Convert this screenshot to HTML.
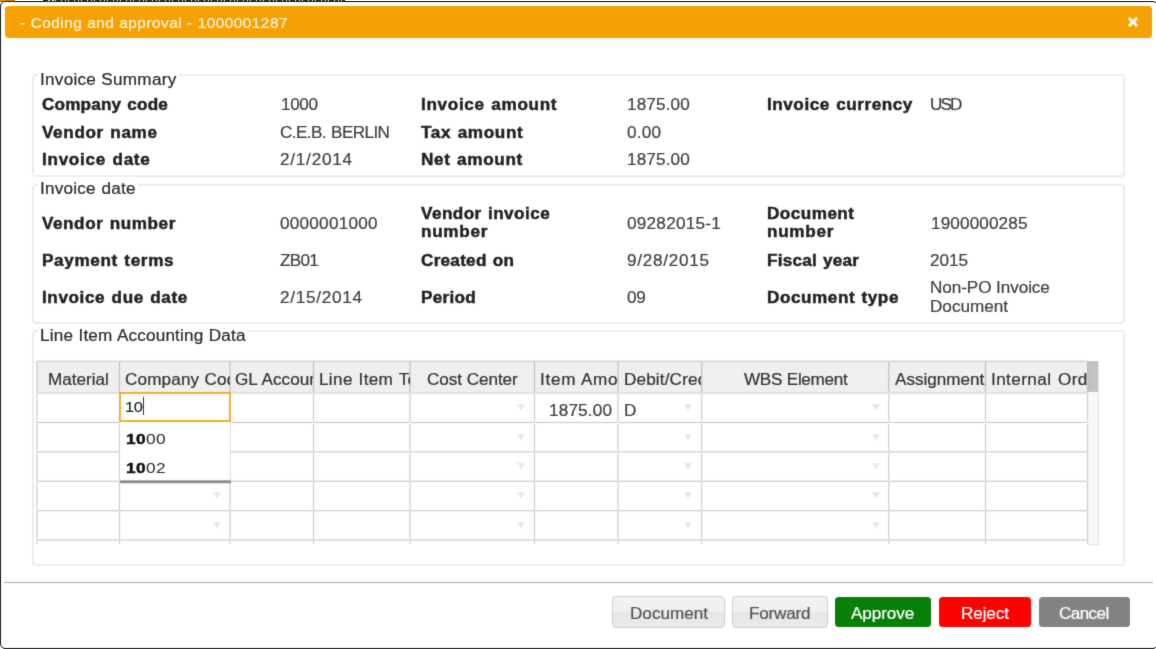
<!DOCTYPE html>
<html><head><meta charset="utf-8"><title>Coding and approval</title>
<style>
html,body{margin:0;padding:0;}
body{width:1156px;height:649px;overflow:hidden;background:#fff;position:relative;font-family:"Liberation Sans",sans-serif;}
.t{position:absolute;white-space:nowrap;transform-origin:0 0;font-size:16px;line-height:20px;color:#333;font-family:"Liberation Sans",sans-serif;}
.abs{position:absolute;}
.fs{position:absolute;left:32px;width:1093px;border:2px solid #e8edf3;border-radius:4px;box-sizing:border-box;}
.lg{position:absolute;background:#fff;height:14px;}
.vl{position:absolute;width:1px;background:#d6d6d6;top:361px;height:183px;}
.hl{position:absolute;height:1px;background:#d6d6d6;left:37px;width:1051px;}
.tri{position:absolute;width:0;height:0;border-left:4px solid transparent;border-right:4px solid transparent;border-top:7.5px solid #e9e9e9;}
.hc{position:absolute;top:362px;height:31px;overflow:hidden;}
.btn{position:absolute;top:596px;height:32px;border-radius:4px;box-sizing:border-box;}
.cb{top:597px;height:30px;border-radius:3.5px;}
</style></head><body><svg width="0" height="0" style="position:absolute"><filter id="soft" x="0" y="0" width="100%" height="100%" color-interpolation-filters="sRGB"><feConvolveMatrix order="3" kernelMatrix="0.015 0.085 0.015 0.085 0.6 0.085 0.015 0.085 0.015" divisor="1" edgeMode="duplicate" preserveAlpha="true"/></filter></svg><div id="w" style="filter:url(#soft);position:absolute;left:0;top:0;width:1156px;height:649px;overflow:hidden;will-change:transform;">
<div class="abs" style="left:0;top:0;width:15px;height:2px;background:#d88a00;"></div>
<div class="abs" style="left:43px;top:0;width:302px;height:1px;background:repeating-linear-gradient(90deg,#2a2a2a 0 5px,#fff 5px 6.5px,#2a2a2a 6.5px 9px,#fff 9px 10.5px,#2a2a2a 10.5px 12px,#fff 12px 13px);"></div>
<div class="abs" style="left:0;top:1px;width:1157.6px;height:648px;border:solid #1c1c1c;border-width:1.5px 1.2px 1.7px 1.4px;border-radius:5px;box-sizing:border-box;background:#fff;"></div>
<div class="abs" style="left:5px;top:6px;width:1147px;height:32.4px;background:#f5a103;border-radius:3.5px;"></div>
<span class="t" style="left:20.20px;top:13px;font-size:14.3px;letter-spacing:0.47px;word-spacing:0.3px;color:#fef4df;transform:scaleX(1.07);-webkit-text-stroke:0.2px;">- Coding and approval - 1000001287</span>
<svg class="abs" style="left:1127px;top:16px" width="12" height="12" viewBox="0 0 12 12"><path d="M1.9 1.9 L10.1 10.1 M10.1 1.9 L1.9 10.1" stroke="#fff" stroke-width="2.8" stroke-linecap="butt" fill="none"/></svg>
<div class="fs" style="top:74px;height:103px;"></div>
<div class="fs" style="top:184px;height:140px;"></div>
<div class="fs" style="top:330px;height:235.5px;"></div>
<div class="lg" style="left:37.5px;top:70px;width:141px;"></div>
<div class="lg" style="left:37.5px;top:179px;width:100px;"></div>
<div class="lg" style="left:37.5px;top:326px;width:210px;"></div>
<span class="t" style="left:39.50px;top:70px;letter-spacing:0.25px;word-spacing:0.2px;color:#2a2a2a;-webkit-text-stroke:0.2px;transform:scaleX(1.07);">Invoice Summary</span>
<span class="t" style="left:39.50px;top:179px;letter-spacing:0.18px;word-spacing:1.0px;color:#2a2a2a;-webkit-text-stroke:0.2px;transform:scaleX(1.07);">Invoice date</span>
<span class="t" style="left:39.50px;top:326px;letter-spacing:0.17px;word-spacing:0.4px;color:#2a2a2a;-webkit-text-stroke:0.2px;transform:scaleX(1.07);">Line Item Accounting Data</span>
<span class="t" style="left:41.70px;top:95px;letter-spacing:0.17px;word-spacing:1.0px;color:#222;font-weight:bold;-webkit-text-stroke:0.45px;transform:scaleX(1.07);">Company code</span>
<span class="t" style="left:41.70px;top:123px;letter-spacing:0.60px;word-spacing:1.0px;color:#222;font-weight:bold;-webkit-text-stroke:0.45px;transform:scaleX(1.07);">Vendor name</span>
<span class="t" style="left:41.70px;top:150px;letter-spacing:0.66px;word-spacing:1.0px;color:#222;font-weight:bold;-webkit-text-stroke:0.45px;transform:scaleX(1.07);">Invoice date</span>
<span class="t" style="left:280.50px;top:95px;letter-spacing:-0.35px;color:#404040;-webkit-text-stroke:0.2px;transform:scaleX(1.07);">1000</span>
<span class="t" style="left:280.00px;top:123px;letter-spacing:-0.56px;word-spacing:1.0px;color:#404040;-webkit-text-stroke:0.2px;transform:scaleX(1.07);">C.E.B. BERLIN</span>
<span class="t" style="left:280.00px;top:150px;letter-spacing:0.72px;color:#404040;-webkit-text-stroke:0.2px;transform:scaleX(1.07);">2/1/2014</span>
<span class="t" style="left:420.75px;top:95px;letter-spacing:0.64px;word-spacing:1.0px;color:#222;font-weight:bold;-webkit-text-stroke:0.45px;transform:scaleX(1.07);">Invoice amount</span>
<span class="t" style="left:420.75px;top:123px;letter-spacing:0.61px;word-spacing:1.0px;color:#222;font-weight:bold;-webkit-text-stroke:0.45px;transform:scaleX(1.07);">Tax amount</span>
<span class="t" style="left:420.75px;top:150px;letter-spacing:0.63px;word-spacing:1.0px;color:#222;font-weight:bold;-webkit-text-stroke:0.45px;transform:scaleX(1.07);">Net amount</span>
<span class="t" style="left:627.25px;top:95px;letter-spacing:0.13px;color:#404040;-webkit-text-stroke:0.2px;transform:scaleX(1.07);">1875.00</span>
<span class="t" style="left:626.50px;top:123px;letter-spacing:0.22px;color:#404040;-webkit-text-stroke:0.2px;transform:scaleX(1.07);">0.00</span>
<span class="t" style="left:627.25px;top:150px;letter-spacing:0.13px;color:#404040;-webkit-text-stroke:0.2px;transform:scaleX(1.07);">1875.00</span>
<span class="t" style="left:767.25px;top:95px;letter-spacing:0.51px;word-spacing:1.0px;color:#222;font-weight:bold;-webkit-text-stroke:0.45px;transform:scaleX(1.07);">Invoice currency</span>
<span class="t" style="left:930.00px;top:95px;letter-spacing:-1.80px;color:#404040;-webkit-text-stroke:0.2px;transform:scaleX(1.07);">USD</span>
<span class="t" style="left:41.70px;top:214px;letter-spacing:0.52px;word-spacing:1.0px;color:#222;font-weight:bold;-webkit-text-stroke:0.45px;transform:scaleX(1.07);">Vendor number</span>
<span class="t" style="left:41.70px;top:251px;letter-spacing:0.60px;word-spacing:1.0px;color:#222;font-weight:bold;-webkit-text-stroke:0.45px;transform:scaleX(1.07);">Payment terms</span>
<span class="t" style="left:41.70px;top:288px;letter-spacing:0.56px;word-spacing:1.0px;color:#222;font-weight:bold;-webkit-text-stroke:0.45px;transform:scaleX(1.07);">Invoice due date</span>
<span class="t" style="left:280.00px;top:214px;letter-spacing:0.24px;color:#404040;-webkit-text-stroke:0.2px;transform:scaleX(1.07);">0000001000</span>
<span class="t" style="left:280.00px;top:251px;letter-spacing:-0.68px;color:#404040;-webkit-text-stroke:0.2px;transform:scaleX(1.07);">ZB01</span>
<span class="t" style="left:280.00px;top:288px;letter-spacing:0.69px;color:#404040;-webkit-text-stroke:0.2px;transform:scaleX(1.07);">2/15/2014</span>
<span class="t" style="left:420.75px;top:204px;letter-spacing:0.42px;word-spacing:1.0px;color:#222;font-weight:bold;-webkit-text-stroke:0.45px;transform:scaleX(1.07);">Vendor invoice</span>
<span class="t" style="left:420.75px;top:222px;letter-spacing:0.66px;color:#222;font-weight:bold;-webkit-text-stroke:0.45px;transform:scaleX(1.07);">number</span>
<span class="t" style="left:420.75px;top:251px;letter-spacing:0.25px;word-spacing:1.0px;color:#222;font-weight:bold;-webkit-text-stroke:0.45px;transform:scaleX(1.07);">Created on</span>
<span class="t" style="left:420.75px;top:288px;letter-spacing:0.28px;color:#222;font-weight:bold;-webkit-text-stroke:0.45px;transform:scaleX(1.07);">Period</span>
<span class="t" style="left:626.50px;top:214px;letter-spacing:0.25px;color:#404040;-webkit-text-stroke:0.2px;transform:scaleX(1.07);">09282015-1</span>
<span class="t" style="left:626.50px;top:251px;letter-spacing:0.69px;color:#404040;-webkit-text-stroke:0.2px;transform:scaleX(1.07);">9/28/2015</span>
<span class="t" style="left:626.50px;top:288px;letter-spacing:-0.23px;color:#404040;-webkit-text-stroke:0.2px;transform:scaleX(1.07);">09</span>
<span class="t" style="left:767.25px;top:204px;letter-spacing:0.44px;color:#222;font-weight:bold;-webkit-text-stroke:0.45px;transform:scaleX(1.07);">Document</span>
<span class="t" style="left:767.25px;top:222px;letter-spacing:0.66px;color:#222;font-weight:bold;-webkit-text-stroke:0.45px;transform:scaleX(1.07);">number</span>
<span class="t" style="left:767.25px;top:251px;letter-spacing:0.22px;word-spacing:1.0px;color:#222;font-weight:bold;-webkit-text-stroke:0.45px;transform:scaleX(1.07);">Fiscal year</span>
<span class="t" style="left:767.25px;top:288px;letter-spacing:0.52px;word-spacing:1.0px;color:#222;font-weight:bold;-webkit-text-stroke:0.45px;transform:scaleX(1.07);">Document type</span>
<span class="t" style="left:930.50px;top:214px;letter-spacing:0.13px;color:#404040;-webkit-text-stroke:0.2px;transform:scaleX(1.07);">1900000285</span>
<span class="t" style="left:930.00px;top:251px;letter-spacing:-0.04px;color:#404040;-webkit-text-stroke:0.2px;transform:scaleX(1.07);">2015</span>
<span class="t" style="left:930.00px;top:278px;letter-spacing:-0.07px;word-spacing:0px;color:#404040;-webkit-text-stroke:0.2px;transform:scaleX(1.07);">Non-PO Invoice</span>
<span class="t" style="left:930.00px;top:297px;letter-spacing:0.00px;color:#404040;-webkit-text-stroke:0.2px;transform:scaleX(1.07);">Document</span>
<div class="abs" style="left:37px;top:361px;width:1051px;height:32px;background:#efefef;"></div>
<div class="abs" style="left:1088px;top:361px;width:10.5px;height:183.5px;background:#f8f8f8;border-right:1px solid #e2e2e2;border-bottom:1px solid #e2e2e2;box-sizing:border-box;"></div>
<div class="abs" style="left:1088px;top:361px;width:10px;height:31px;background:#c2c2c2;"></div>
<div class="abs" style="left:36px;top:361px;width:1px;height:183px;background:rgba(0,0,0,0.12);"></div>
<div class="abs" style="left:37px;top:361px;width:1px;height:183px;background:rgba(0,0,0,0.12);"></div>
<div class="abs" style="left:118px;top:361px;width:1px;height:183px;background:rgba(0,0,0,0.024);"></div>
<div class="abs" style="left:119px;top:361px;width:1px;height:183px;background:rgba(0,0,0,0.192);"></div>
<div class="abs" style="left:120px;top:361px;width:1px;height:183px;background:rgba(0,0,0,0.024);"></div>
<div class="abs" style="left:229px;top:361px;width:1px;height:183px;background:rgba(0,0,0,0.12);"></div>
<div class="abs" style="left:230px;top:361px;width:1px;height:183px;background:rgba(0,0,0,0.12);"></div>
<div class="abs" style="left:312px;top:361px;width:1px;height:183px;background:rgba(0,0,0,0.024);"></div>
<div class="abs" style="left:313px;top:361px;width:1px;height:183px;background:rgba(0,0,0,0.192);"></div>
<div class="abs" style="left:314px;top:361px;width:1px;height:183px;background:rgba(0,0,0,0.024);"></div>
<div class="abs" style="left:409px;top:361px;width:1px;height:183px;background:rgba(0,0,0,0.12);"></div>
<div class="abs" style="left:410px;top:361px;width:1px;height:183px;background:rgba(0,0,0,0.12);"></div>
<div class="abs" style="left:533px;top:361px;width:1px;height:183px;background:rgba(0,0,0,0.024);"></div>
<div class="abs" style="left:534px;top:361px;width:1px;height:183px;background:rgba(0,0,0,0.192);"></div>
<div class="abs" style="left:535px;top:361px;width:1px;height:183px;background:rgba(0,0,0,0.024);"></div>
<div class="abs" style="left:617px;top:361px;width:1px;height:183px;background:rgba(0,0,0,0.12);"></div>
<div class="abs" style="left:618px;top:361px;width:1px;height:183px;background:rgba(0,0,0,0.12);"></div>
<div class="abs" style="left:701px;top:361px;width:1px;height:183px;background:rgba(0,0,0,0.168);"></div>
<div class="abs" style="left:702px;top:361px;width:1px;height:183px;background:rgba(0,0,0,0.072);"></div>
<div class="abs" style="left:888px;top:361px;width:1px;height:183px;background:rgba(0,0,0,0.168);"></div>
<div class="abs" style="left:889px;top:361px;width:1px;height:183px;background:rgba(0,0,0,0.072);"></div>
<div class="abs" style="left:984px;top:361px;width:1px;height:183px;background:rgba(0,0,0,0.024);"></div>
<div class="abs" style="left:985px;top:361px;width:1px;height:183px;background:rgba(0,0,0,0.192);"></div>
<div class="abs" style="left:986px;top:361px;width:1px;height:183px;background:rgba(0,0,0,0.024);"></div>
<div class="abs" style="left:1086px;top:361px;width:1px;height:183px;background:rgba(0,0,0,0.024);"></div>
<div class="abs" style="left:1087px;top:361px;width:1px;height:183px;background:rgba(0,0,0,0.192);"></div>
<div class="abs" style="left:1088px;top:361px;width:1px;height:183px;background:rgba(0,0,0,0.024);"></div>
<div class="abs" style="left:37px;top:360px;width:1051px;height:1px;background:rgb(239,239,239);"></div>
<div class="abs" style="left:37px;top:361px;width:1051px;height:1px;background:rgb(210,210,210);"></div>
<div class="abs" style="left:37px;top:392px;width:1051px;height:1px;background:rgb(224,224,224);"></div>
<div class="abs" style="left:37px;top:393px;width:1051px;height:1px;background:rgb(224,224,224);"></div>
<div class="abs" style="left:37px;top:421px;width:1051px;height:1px;background:rgb(249,249,249);"></div>
<div class="abs" style="left:37px;top:422px;width:1051px;height:1px;background:rgb(206,206,206);"></div>
<div class="abs" style="left:37px;top:423px;width:1051px;height:1px;background:rgb(249,249,249);"></div>
<div class="abs" style="left:37px;top:451px;width:1051px;height:1px;background:rgb(217,217,217);"></div>
<div class="abs" style="left:37px;top:452px;width:1051px;height:1px;background:rgb(232,232,232);"></div>
<div class="abs" style="left:37px;top:480px;width:1051px;height:1px;background:rgb(237,237,237);"></div>
<div class="abs" style="left:37px;top:481px;width:1051px;height:1px;background:rgb(212,212,212);"></div>
<div class="abs" style="left:37px;top:510px;width:1051px;height:1px;background:rgb(210,210,210);"></div>
<div class="abs" style="left:37px;top:511px;width:1051px;height:1px;background:rgb(239,239,239);"></div>
<div class="abs" style="left:37px;top:539px;width:1051px;height:1px;background:rgb(227,227,227);"></div>
<div class="abs" style="left:37px;top:540px;width:1051px;height:1px;background:rgb(222,222,222);"></div>
<div class="hc" style="left:37.50px;width:81.50px;"><span class="t" style="left:10.50px;top:8px;letter-spacing:-0.01px;-webkit-text-stroke:0.2px;transform:scaleX(1.07);">Material</span>
</div>
<div class="hc" style="left:120.00px;width:109.50px;"><span class="t" style="left:5.00px;top:8px;letter-spacing:0.14px;word-spacing:0.3px;-webkit-text-stroke:0.2px;transform:scaleX(1.07);">Company Code</span>
</div>
<div class="hc" style="left:230.50px;width:82.50px;"><span class="t" style="left:4.50px;top:8px;letter-spacing:0.05px;word-spacing:0.3px;-webkit-text-stroke:0.2px;transform:scaleX(1.07);">GL Account</span>
</div>
<div class="hc" style="left:314.00px;width:95.50px;"><span class="t" style="left:5.00px;top:8px;letter-spacing:0.33px;word-spacing:0.6px;-webkit-text-stroke:0.2px;transform:scaleX(1.07);">Line Item Text</span>
</div>
<div class="hc" style="left:410.50px;width:123.50px;"><span class="t" style="left:16.50px;top:8px;letter-spacing:-0.09px;word-spacing:0.3px;-webkit-text-stroke:0.2px;transform:scaleX(1.07);">Cost Center</span>
</div>
<div class="hc" style="left:535.00px;width:82.50px;"><span class="t" style="left:5.00px;top:8px;letter-spacing:0.66px;word-spacing:0.3px;-webkit-text-stroke:0.2px;transform:scaleX(1.07);">Item Amount</span>
</div>
<div class="hc" style="left:618.50px;width:82.75px;"><span class="t" style="left:5.25px;top:8px;letter-spacing:0.14px;-webkit-text-stroke:0.2px;transform:scaleX(1.07);">Debit/Credit</span>
</div>
<div class="hc" style="left:702.25px;width:186.00px;"><span class="t" style="left:41.50px;top:8px;letter-spacing:-0.30px;word-spacing:0.3px;-webkit-text-stroke:0.2px;transform:scaleX(1.07);">WBS Element</span>
</div>
<div class="hc" style="left:889.25px;width:95.75px;"><span class="t" style="left:5.25px;top:8px;letter-spacing:-0.02px;-webkit-text-stroke:0.2px;transform:scaleX(1.07);">Assignment</span>
</div>
<div class="hc" style="left:986.00px;width:101.00px;"><span class="t" style="left:5.00px;top:8px;letter-spacing:0.38px;word-spacing:1.3px;-webkit-text-stroke:0.2px;transform:scaleX(1.07);">Internal Order</span>
</div>
<span class="t" style="left:549.30px;top:401px;letter-spacing:0.17px;color:#404040;-webkit-text-stroke:0.2px;transform:scaleX(1.07);">1875.00</span>
<span class="t" style="left:624.25px;top:401px;letter-spacing:0.00px;color:#404040;-webkit-text-stroke:0.2px;transform:scaleX(1.07);">D</span>
<div class="tri" style="left:517.10px;top:404.00px;"></div>
<div class="tri" style="left:683.75px;top:404.00px;"></div>
<div class="tri" style="left:871.50px;top:404.00px;"></div>
<div class="tri" style="left:517.10px;top:433.50px;"></div>
<div class="tri" style="left:683.75px;top:433.50px;"></div>
<div class="tri" style="left:871.50px;top:433.50px;"></div>
<div class="tri" style="left:517.10px;top:462.75px;"></div>
<div class="tri" style="left:683.75px;top:462.75px;"></div>
<div class="tri" style="left:871.50px;top:462.75px;"></div>
<div class="tri" style="left:517.10px;top:492.25px;"></div>
<div class="tri" style="left:683.75px;top:492.25px;"></div>
<div class="tri" style="left:871.50px;top:492.25px;"></div>
<div class="tri" style="left:212.80px;top:492.25px;"></div>
<div class="tri" style="left:517.10px;top:521.75px;"></div>
<div class="tri" style="left:683.75px;top:521.75px;"></div>
<div class="tri" style="left:871.50px;top:521.75px;"></div>
<div class="tri" style="left:212.80px;top:521.75px;"></div>
<div class="abs" style="left:120px;top:421px;width:110px;height:59.6px;background:#fff;"></div>
<div class="abs" style="left:120px;top:480px;width:111px;height:1px;background:#b4b4b4;"></div>
<div class="abs" style="left:120px;top:481px;width:111px;height:1px;background:#7e7e7e;"></div>
<div class="abs" style="left:120px;top:482px;width:111px;height:1px;background:#9a9a9a;"></div>
<div class="abs" style="left:120px;top:483px;width:111px;height:1px;background:rgba(120,120,120,.25);"></div>
<span class="t" style="left:126.10px;top:429px;font-size:14.4px;letter-spacing:0.33px;color:#2a2a2a;transform:scaleX(1.2);"><b style="color:#111;-webkit-text-stroke:0.45px">10</b>00</span>
<span class="t" style="left:126.10px;top:458px;font-size:14.4px;letter-spacing:0.33px;color:#2a2a2a;transform:scaleX(1.2);"><b style="color:#111;-webkit-text-stroke:0.45px">10</b>02</span>
<div class="abs" style="left:119.3px;top:392.3px;width:111.4px;height:29.9px;border:2px solid #f7ad33;background:#fff;box-sizing:border-box;"></div>
<span class="t" style="left:124.60px;top:397px;font-size:14.6px;letter-spacing:-0.36px;color:#222;transform:scaleX(1.12);-webkit-text-stroke:0.2px;">10</span>
<div class="abs" style="left:143px;top:397px;width:1px;height:17.5px;background:#333;"></div>
<div class="abs" style="left:4px;top:581.5px;width:1149px;height:1px;background:#aaa;"></div>
<div class="btn" style="left:612.1px;width:113.1px;background:linear-gradient(#f1f1f1 0,#efefef 50%,#e7e7e7 51%,#e9e9e9 100%);border:1px solid #cfcfcf;"></div>
<div class="btn" style="left:731.5px;width:96px;background:linear-gradient(#f1f1f1 0,#efefef 50%,#e7e7e7 51%,#e9e9e9 100%);border:1px solid #cfcfcf;"></div>
<div class="btn cb" style="left:835px;width:95.7px;background:#088008;"></div>
<div class="btn cb" style="left:939.2px;width:91.5px;background:#fe0202;"></div>
<div class="btn cb" style="left:1038.7px;width:91.6px;background:#838383;"></div>
<span class="t" style="left:630.00px;top:604px;letter-spacing:0.00px;color:#555;-webkit-text-stroke:0.2px;transform:scaleX(1.07);">Document</span>
<span class="t" style="left:749.25px;top:604px;letter-spacing:-0.19px;color:#555;-webkit-text-stroke:0.2px;transform:scaleX(1.07);">Forward</span>
<span class="t" style="left:851.25px;top:604px;letter-spacing:-0.09px;color:#fff;-webkit-text-stroke:0.2px;transform:scaleX(1.07);">Approve</span>
<span class="t" style="left:961.25px;top:604px;letter-spacing:-0.10px;color:#fff;-webkit-text-stroke:0.2px;transform:scaleX(1.07);">Reject</span>
<span class="t" style="left:1059.25px;top:604px;letter-spacing:-0.56px;color:#fff;-webkit-text-stroke:0.2px;transform:scaleX(1.07);">Cancel</span>
</div></body></html>
